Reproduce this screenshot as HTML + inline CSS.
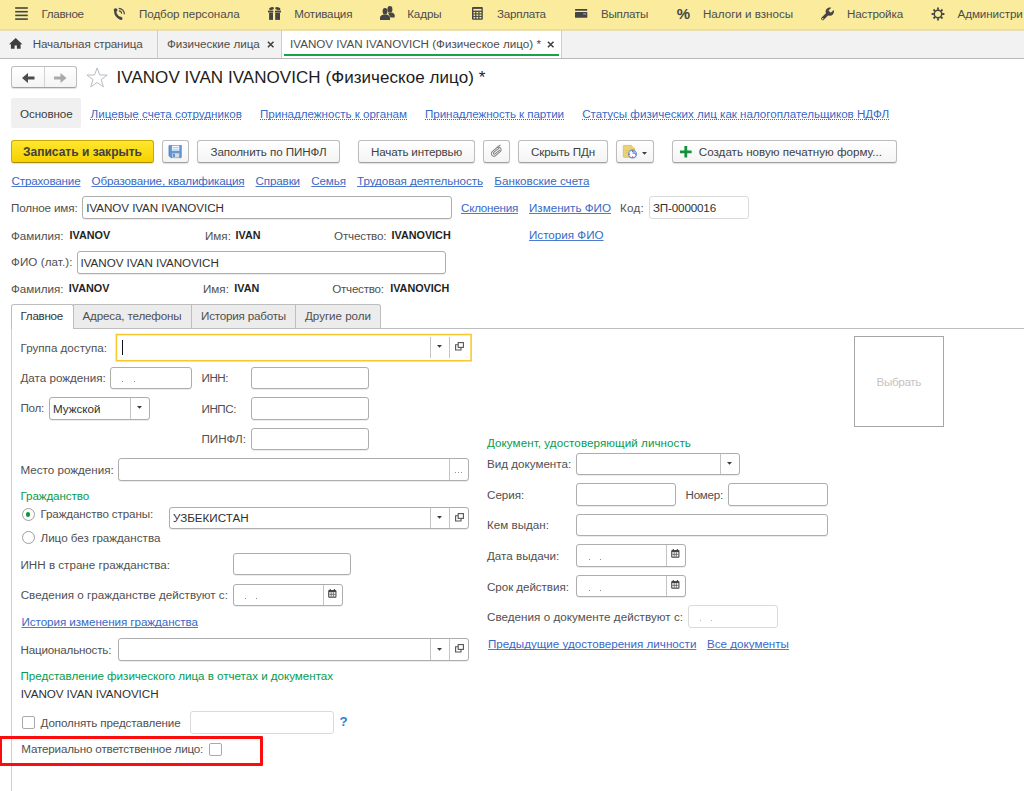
<!DOCTYPE html>
<html lang="ru">
<head>
<meta charset="utf-8">
<title>IVANOV IVAN IVANOVICH</title>
<style>
html,body{margin:0;padding:0;}
body{width:1024px;height:791px;overflow:hidden;background:#fff;position:relative;
 font-family:"Liberation Sans",sans-serif;font-size:11.63px;color:#505050;}
.a{position:absolute;white-space:nowrap;line-height:14px;}
.topbar{position:absolute;left:0;top:0;width:1024px;height:30px;background:#fbec9d;}
.tabbar{position:absolute;left:0;top:30px;width:1024px;height:28px;background:#f2f2f2;border-bottom:1px solid #b9b9b9;}
.m{color:#4d4d4d;}
.lnk{color:#3969c6;text-decoration:underline;text-decoration-skip-ink:none;text-decoration-thickness:1px;text-decoration-color:#4f7bcf;text-underline-offset:1px;}
.dot{color:#3969c6;text-decoration:underline dotted;text-decoration-skip-ink:none;text-decoration-thickness:1px;text-underline-offset:0.8px;}
.grn{color:#099a4f;}
.v{color:#303030;}
.inp{position:absolute;box-sizing:border-box;border:1px solid #adadad;border-radius:3px;background:#fff;height:22px;box-shadow:0 1px 0 rgba(0,0,0,.07);}
.inp.l{border-color:#dadada;box-shadow:none;}
.btn{position:absolute;box-sizing:border-box;border:1px solid #bdbdbd;border-bottom-color:#a2a2a2;border-radius:3px;background:linear-gradient(#fff,#f4f4f4);height:23px;
 box-shadow:0 1px 1px rgba(0,0,0,.13);text-align:center;line-height:21px;color:#3f3f3f;white-space:nowrap;}
.sep{position:absolute;width:1px;background:#c4c4c4;}
.b{font-weight:bold;color:#1f1f1f;font-size:10.8px;}
.dt{position:absolute;width:1px;height:1px;background:#909090;}
.tri{position:absolute;width:0;height:0;border-left:2.6px solid transparent;border-right:2.6px solid transparent;border-top:2.8px solid #3c3c3c;}
.chk{position:absolute;box-sizing:border-box;width:13px;height:13px;border:1px solid #a9a9a9;border-radius:2px;background:#fff;}
.rad{position:absolute;box-sizing:border-box;width:13px;height:13px;border:1px solid #9d9d9d;border-radius:50%;background:#fff;}
svg{position:absolute;overflow:visible;}
</style>
</head>
<body>
<!-- TOP MENU -->
<div class="topbar"></div>
<div style="position:absolute;left:0;top:29px;width:1024px;height:1px;background:#eedf8a;"></div>
<!-- hamburger -->
<svg style="left:15px;top:7px;" width="13" height="13" viewBox="0 0 13 13"><g fill="#454545"><rect x="0.2" y="0.2" width="12.6" height="1.6"/><rect x="0.2" y="3.9" width="12.6" height="1.6"/><rect x="0.2" y="7.6" width="12.6" height="1.6"/><rect x="0.2" y="11.3" width="12.6" height="1.6"/></g></svg>
<div class="a m" style="left:41.5px;letter-spacing:-0.310px;top:6.5px;">Главное</div>
<!-- phone -->
<svg style="left:113px;top:7px;" width="13" height="14" viewBox="0 0 13 14"><path d="M2.1 3.4 C2.2 7 4.4 10.2 7.4 11.5" fill="none" stroke="#454545" stroke-width="2.3" stroke-linecap="round"/><ellipse cx="2.6" cy="2.9" rx="1.9" ry="1.7" fill="#454545"/><ellipse cx="7.4" cy="11.2" rx="2.2" ry="1.5" transform="rotate(25 7.4 11.2)" fill="#454545"/><path d="M5.9 3.9 A3 3 0 0 1 8.7 6.6" fill="none" stroke="#454545" stroke-width="1.1"/><path d="M5.7 1.3 A5.8 5.8 0 0 1 11.4 7.2" fill="none" stroke="#454545" stroke-width="1.2"/></svg>
<div class="a m" style="left:139.0px;letter-spacing:-0.084px;top:6.5px;">Подбор персонала</div>
<!-- gift -->
<svg style="left:268px;top:7px;" width="13" height="13" viewBox="0 0 13 13"><g fill="#454545"><ellipse cx="3.5" cy="1.6" rx="2.5" ry="1.5" transform="rotate(-12 3.5 1.6)"/><ellipse cx="9.8" cy="1.6" rx="2.7" ry="1.5" transform="rotate(12 9.8 1.6)"/><rect x="0" y="3.6" width="5.3" height="1.9"/><rect x="7" y="3.6" width="6" height="1.9"/><rect x="1.1" y="5.8" width="3.9" height="7.1"/><rect x="7.2" y="5.8" width="4.8" height="7.1"/></g></svg>
<div class="a m" style="left:294.2px;letter-spacing:-0.190px;top:6.5px;">Мотивация</div>
<!-- people -->
<svg style="left:380px;top:6px;" width="15" height="14" viewBox="0 0 15 14"><g fill="#454545"><ellipse cx="9.9" cy="3.4" rx="2.5" ry="3.3"/><path d="M8 7 L12 6.6 C13.6 7.2 14.7 8.2 14.7 9.6 L14.7 11.4 L10.5 11.4 Z"/><ellipse cx="5" cy="5.2" rx="2.4" ry="3.2"/><path d="M0 13.9 L0 11.4 C0 9.8 1.6 9 3.4 8.4 L6.6 8.4 C8.6 9 10 9.8 10 11.4 L10 13.9 Z"/></g></svg>
<div class="a m" style="left:407.2px;letter-spacing:-0.109px;top:6.5px;">Кадры</div>
<!-- calculator -->
<svg style="left:471.7px;top:7.2px;" width="11" height="13" viewBox="0 0 11 13"><rect x="0" y="0" width="10.8" height="12.7" rx="1" fill="#454545"/><g fill="#fbec9d"><rect x="1.3" y="1.9" width="8.2" height="1.7"/><rect x="1.5" y="4.9" width="1.7" height="1.5"/><rect x="4.4" y="4.9" width="1.9" height="1.5"/><rect x="7.5" y="4.9" width="1.9" height="1.5"/><rect x="1.5" y="7.4" width="1.7" height="1.5"/><rect x="4.4" y="7.4" width="1.9" height="1.5"/><rect x="7.5" y="7.4" width="1.9" height="1.5"/><rect x="1.5" y="9.9" width="1.7" height="1.6"/><rect x="4.4" y="9.9" width="1.9" height="1.6"/><rect x="7.5" y="9.9" width="1.9" height="1.6"/></g></svg>
<div class="a m" style="left:497.0px;letter-spacing:-0.263px;top:6.5px;">Зарплата</div>
<!-- card -->
<svg style="left:574.8px;top:9px;" width="13" height="9" viewBox="0 0 13 9"><rect x="0" y="0.1" width="12.3" height="1.6" rx="0.4" fill="#454545"/><rect x="0" y="3.1" width="12.3" height="5.7" rx="0.6" fill="#454545"/><rect x="8.2" y="4" width="3" height="1.7" fill="#8b8672"/></svg>
<div class="a m" style="left:601.0px;letter-spacing:-0.297px;top:6.5px;">Выплаты</div>
<div class="a" style="left:676.8px;top:4.9px;font-size:15px;font-weight:bold;color:#454545;line-height:18px;">%</div>
<div class="a m" style="left:703.0px;letter-spacing:-0.024px;top:6.5px;">Налоги и взносы</div>
<!-- wrench -->
<svg style="left:820px;top:6.5px;" width="14" height="14" viewBox="0 0 14 14"><path d="M2.7 11.7 L8 6.4" fill="none" stroke="#454545" stroke-width="3.1" stroke-linecap="round"/><circle cx="9.8" cy="4.6" r="4.2" fill="#454545"/><rect x="9.6" y="3" width="6" height="3.2" transform="rotate(-45 9.8 4.6)" fill="#fbec9d"/><circle cx="2.7" cy="11.7" r="0.75" fill="#fbec9d"/></svg>
<div class="a m" style="left:847.0px;letter-spacing:-0.137px;top:6.5px;">Настройка</div>
<!-- gear -->
<svg style="left:931px;top:6.5px;" width="14" height="14" viewBox="-7 -7 14 14"><circle r="3.75" fill="none" stroke="#454545" stroke-width="1.5"/><g stroke="#454545" stroke-width="1.8"><path d="M0 -4.2V-6.4M0 4.2V6.4M-4.2 0H-6.4M4.2 0H6.4"/><path d="M2.97 -2.97L4.5 -4.5M-2.97 -2.97L-4.5 -4.5M2.97 2.97L4.5 4.5M-2.97 2.97L-4.5 4.5"/></g></svg>
<div class="a m" style="left:957.5px;letter-spacing:-0.075px;top:6.5px;">Администри</div>

<!-- TAB BAR -->
<div class="tabbar"></div>
<div style="position:absolute;left:0;top:30px;width:1024px;height:1px;background:#e9dfb2;"></div>
<svg style="left:9px;top:37.6px;" width="14" height="11" viewBox="0 0 14 11"><path d="M6.7 0 L13.4 6.2 L11.6 6.2 L11.6 10.7 L7.9 10.7 L7.9 7.4 L5.6 7.4 L5.6 10.7 L1.9 10.7 L1.9 6.2 L0 6.2 Z" fill="#3f3f3f"/></svg>
<div class="a m" style="left:32.8px;letter-spacing:-0.152px;top:36.7px;">Начальная страница</div>
<div class="sep" style="left:157px;top:30px;height:28px;background:#cdcdcd;"></div>
<div class="a m" style="left:167.0px;letter-spacing:-0.028px;top:36.7px;">Физические лица</div>
<svg style="left:266.6px;top:41.4px;" width="7.4" height="7" viewBox="0 0 8 8"><path d="M0.8 0.8L7.2 7.2M7.2 0.8L0.8 7.2" stroke="#3f3f3f" stroke-width="1.7"/></svg>
<div class="sep" style="left:281px;top:30px;height:28px;background:#cdcdcd;"></div>
<div style="position:absolute;left:282px;top:31px;width:279px;height:27px;background:#fff;"></div>
<div style="position:absolute;left:284px;top:54.3px;width:275px;height:2px;background:#1ba04c;"></div>
<div class="a m" style="left:290.0px;letter-spacing:0.006px;top:36.7px;">IVANOV IVAN IVANOVICH (Физическое лицо) *</div>
<svg style="left:547px;top:41.4px;" width="7.4" height="7" viewBox="0 0 8 8"><path d="M0.8 0.8L7.2 7.2M7.2 0.8L0.8 7.2" stroke="#3f3f3f" stroke-width="1.7"/></svg>
<div class="sep" style="left:561px;top:30px;height:28px;background:#cdcdcd;"></div>

<!-- TITLE -->
<div class="btn" style="left:11px;top:66px;width:66px;height:22px;"></div>
<div class="sep" style="left:44px;top:67px;height:20px;background:#d2d2d2;"></div>
<svg style="left:21.5px;top:72.5px;" width="13" height="10" viewBox="0 0 13 10"><path d="M12.5 3.4H6V0L0 5L6 10V6.6H12.5Z" fill="#4c4c4c"/></svg>
<svg style="left:53.7px;top:72.5px;" width="13" height="10" viewBox="0 0 13 10"><path d="M0 3.4H6.5V0L12.5 5L6.5 10V6.6H0Z" fill="#a9a9a9"/></svg>
<svg style="left:86.3px;top:66.9px;" width="22.2" height="21" viewBox="0 0 20 19"><path d="M10 0.8 L12.3 7.2 L19.2 7.3 L13.7 11.4 L15.7 18 L10 14 L4.3 18 L6.3 11.4 L0.8 7.3 L7.7 7.2 Z" fill="none" stroke="#b5bcc4" stroke-width="0.9"/></svg>
<div class="a" style="left:116.5px;letter-spacing:0.052px;top:67.8px;font-size:17px;line-height:20px;color:#1c1c1c;">IVANOV IVAN IVANOVICH (Физическое лицо) *</div>

<!-- SUBNAV -->
<div style="position:absolute;left:11px;top:98px;width:70px;height:30px;background:#f0f0f0;border-radius:2px;"></div>
<div class="a" style="left:20.0px;letter-spacing:-0.085px;top:106.6px;color:#3c3c3c;">Основное</div>
<div class="a dot" style="left:90.5px;letter-spacing:0.026px;top:106.6px;">Лицевые счета сотрудников</div>
<div class="a dot" style="left:260.0px;letter-spacing:-0.032px;top:106.6px;">Принадлежность к органам</div>
<div class="a dot" style="left:425.0px;letter-spacing:-0.078px;top:106.6px;">Принадлежность к партии</div>
<div class="a dot" style="left:582.2px;letter-spacing:-0.020px;top:106.6px;">Статусы физических лиц как налогоплательщиков НДФЛ</div>

<!-- TOOLBAR -->
<div class="btn" style="left:11px;top:140px;width:143px;background:linear-gradient(#ffe62e,#f6d100);border-color:#c9aa00;border-bottom-color:#a88d00;font-weight:bold;font-size:12px;color:#42413a;line-height:23px;">Записать и закрыть</div>
<div class="btn" style="left:162px;top:140px;width:27px;"></div>
<svg style="left:169px;top:145.3px;" width="13" height="13" viewBox="0 0 13 13"><path d="M0.6 0H12.2Q12.8 0 12.8 0.6V12Q12.8 12.6 12.2 12.6H1.8L0 10.8V0.6Q0 0 0.6 0Z" fill="#6496d6"/><path d="M0 0.6V10.8L1.8 12.6H12.2" fill="none" stroke="#4a78b8" stroke-width="0.8"/><rect x="2.9" y="0.7" width="7.4" height="5" fill="#f4f8fd"/><rect x="3.6" y="2" width="6" height="0.8" fill="#a9c4e8"/><rect x="3.6" y="3.8" width="6" height="0.8" fill="#a9c4e8"/><rect x="3.3" y="8.2" width="6.9" height="4.4" fill="#d3dcdf"/><rect x="4.2" y="8.8" width="1.6" height="3.2" fill="#4f80c2"/></svg>
<div class="btn" style="left:197px;top:140px;width:143px;letter-spacing:-0.08px;">Заполнить по ПИНФЛ</div>
<div class="btn" style="left:358px;top:140px;width:117px;letter-spacing:-0.17px;">Начать интервью</div>
<div class="btn" style="left:483px;top:140px;width:27px;"></div>
<svg style="left:496.7px;top:150.8px;" width="1" height="1" viewBox="0 0 1 1"><g transform="rotate(-40)" fill="none" stroke="#7d7d7d" stroke-width="0.95"><rect x="-6.6" y="-2.6" width="11.2" height="5.2" rx="2.6"/><path d="M3.8 -1H-3.4A1 1 0 0 0 -3.4 1H3"/><path d="M2 -2.6H6.6"/></g></svg>
<div class="btn" style="left:518px;top:140px;width:90px;letter-spacing:-0.16px;">Скрыть ПДн</div>
<div class="btn" style="left:616px;top:140px;width:38px;"></div>
<svg style="left:623px;top:145.3px;" width="14" height="14" viewBox="0 0 14 14"><path d="M0.9 0.4H8.2L11.6 3.6V11.6Q11.6 12.2 11 12.2H0.9Q0.3 12.2 0.3 11.6V1Q0.3 0.4 0.9 0.4Z" fill="#ecd276" stroke="#d9b955" stroke-width="0.8"/><path d="M8.2 0.4V3.6H11.6" fill="#f6e6a8" stroke="#d9b955" stroke-width="0.6"/><path d="M2.6 5.6H5.6M2.6 7.6H4.6" stroke="#dcc060" stroke-width="0.9"/><circle cx="9.5" cy="9.1" r="3.9" fill="#fff" stroke="#5c90d2" stroke-width="1.2"/><path d="M9.5 9.1V5.8A3.3 3.3 0 0 1 12.8 9.1Z" fill="#8db3e4"/><g fill="#e03535"><circle cx="9.5" cy="6.2" r="0.7"/><circle cx="9.5" cy="12" r="0.7"/><circle cx="6.6" cy="9.1" r="0.7"/><circle cx="12.4" cy="9.1" r="0.7"/></g></svg>
<svg style="left:642.2px;top:151.6px;" width="5" height="2.8" viewBox="0 0 5.4 3"><path d="M0 0H5.4L2.7 3Z" fill="#3a3a3a"/></svg>
<div class="btn" style="left:672px;top:140px;width:225px;text-align:left;padding-left:25.8px;">Создать новую печатную форму...</div>
<svg style="left:680px;top:146px;" width="12" height="12" viewBox="0 0 12 12"><path d="M4.4 0H7.2V4.4H11.6V7.2H7.2V11.6H4.4V7.2H0V4.4H4.4Z" fill="#12903a"/></svg>
<!-- LINKS ROW -->
<div class="a lnk" style="left:11.5px;letter-spacing:-0.153px;top:173.5px;">Страхование</div>
<div class="a lnk" style="left:91.5px;letter-spacing:-0.148px;top:173.5px;">Образование, квалификация</div>
<div class="a lnk" style="left:255.5px;letter-spacing:-0.127px;top:173.5px;">Справки</div>
<div class="a lnk" style="left:311.3px;letter-spacing:-0.144px;top:173.5px;">Семья</div>
<div class="a lnk" style="left:357.0px;letter-spacing:-0.059px;top:173.5px;">Трудовая деятельность</div>
<div class="a lnk" style="left:494.3px;letter-spacing:0.024px;top:173.5px;">Банковские счета</div>

<!-- FULL NAME -->
<div class="a" style="left:11.0px;letter-spacing:-0.132px;top:200.5px;">Полное имя:</div>
<div class="inp" style="left:82px;top:196px;height:23px;width:370px;"></div>
<div class="a v" style="left:86.3px;letter-spacing:-0.066px;top:201px;">IVANOV IVAN IVANOVICH</div>
<div class="a lnk" style="left:461.0px;letter-spacing:-0.233px;top:200.5px;">Склонения</div>
<div class="a lnk" style="left:529.0px;letter-spacing:0.008px;top:200.5px;">Изменить ФИО</div>
<div class="a" style="left:620.0px;letter-spacing:0.250px;top:200.5px;">Код:</div>
<div class="inp l" style="left:649px;top:196px;height:23px;width:100px;"></div>
<div class="a v" style="left:653.0px;letter-spacing:-0.152px;top:201px;">ЗП-0000016</div>

<div class="a" style="left:11px;top:228.5px;">Фамилия:</div>
<div class="a b" style="left:69.5px;top:228.4px;">IVANOV</div>
<div class="a" style="left:205px;top:228.5px;">Имя:</div>
<div class="a b" style="left:235.5px;top:228.4px;">IVAN</div>
<div class="a" style="left:334.1px;letter-spacing:-0.174px;top:228.5px;">Отчество:</div>
<div class="a b" style="left:391.5px;top:228.4px;">IVANOVICH</div>
<div class="a lnk" style="left:529px;top:227.9px;">История ФИО</div>

<div class="a" style="left:11.0px;letter-spacing:0.072px;top:255px;">ФИО (лат.):</div>
<div class="inp" style="left:77px;top:251px;height:23px;width:369px;"></div>
<div class="a v" style="left:80.5px;letter-spacing:-0.028px;top:255.5px;">IVANOV IVAN IVANOVICH</div>

<div class="a" style="left:11px;top:282px;">Фамилия:</div>
<div class="a b" style="left:68.8px;top:281.3px;">IVANOV</div>
<div class="a" style="left:203px;top:282px;">Имя:</div>
<div class="a b" style="left:234.3px;top:281.3px;">IVAN</div>
<div class="a" style="left:332.2px;letter-spacing:-0.241px;top:282px;">Отчество:</div>
<div class="a b" style="left:390.2px;top:281.3px;">IVANOVICH</div>

<!-- PAGE TABS -->
<div style="position:absolute;left:11px;top:328px;width:1013px;height:1px;background:#bdbdbd;"></div>
<div style="position:absolute;left:11px;top:328px;width:1px;height:463px;background:#cfcfcf;"></div>
<div style="position:absolute;left:73px;top:304px;width:308px;height:24px;background:#ececec;border:1px solid #bdbdbd;border-bottom:none;box-sizing:border-box;border-radius:0 3px 0 0;"></div>
<div class="sep" style="left:191px;top:304px;height:24px;background:#bdbdbd;"></div>
<div class="sep" style="left:295px;top:304px;height:24px;background:#bdbdbd;"></div>
<div style="position:absolute;left:11px;top:304px;width:63px;height:25px;background:#fff;border:1px solid #bdbdbd;border-bottom:none;box-sizing:border-box;border-radius:3px 3px 0 0;"></div>
<div class="a" style="left:20.5px;letter-spacing:-0.275px;top:308.9px;color:#333;">Главное</div>
<div class="a" style="left:82.5px;letter-spacing:-0.158px;top:308.9px;">Адреса, телефоны</div>
<div class="a" style="left:201.0px;letter-spacing:-0.200px;top:308.9px;">История работы</div>
<div class="a" style="left:305.0px;letter-spacing:-0.037px;top:308.9px;">Другие роли</div>
<!-- LEFT FORM -->
<div class="a" style="left:20.5px;top:340.5px;">Группа доступа:</div>
<svg style="left:115px;top:333px;" width="358" height="30" viewBox="0 0 358 30"><rect x="1.4" y="1.55" width="354.7" height="26.2" fill="#fff" stroke="#f8c92f" stroke-width="1.6"/></svg>
<div style="position:absolute;left:122px;top:340px;width:1px;height:15px;background:#111;"></div>
<div class="sep" style="left:430px;top:337px;height:21px;"></div>
<div class="sep" style="left:449px;top:337px;height:21px;"></div>
<svg style="left:437.2px;top:345px;" width="5" height="2.8" viewBox="0 0 5.4 3"><path d="M0 0H5.4L2.7 3Z" fill="#3a3a3a"/></svg>
<svg style="left:455px;top:342.2px;" width="9" height="9" viewBox="0 0 9 9"><rect x="3.2" y="0.6" width="5.2" height="4.8" fill="#fff" stroke="#555" stroke-width="1.1"/><path d="M3 2.8H0.6V8H6V5.6" fill="none" stroke="#555" stroke-width="1.1"/></svg>

<div class="a" style="left:20.5px;top:371px;">Дата рождения:</div>
<div class="inp" style="left:110px;top:367px;height:22px;width:82px;"></div>
<div class="dt" style="left:122px;top:381px;"></div><div class="dt" style="left:134px;top:381px;"></div>
<div class="a" style="left:201.5px;letter-spacing:-0.473px;top:371px;">ИНН:</div>
<div class="inp" style="left:251px;top:367px;height:22px;width:118px;"></div>

<div class="a" style="left:20.5px;letter-spacing:-0.273px;top:401px;">Пол:</div>
<div class="inp" style="left:49px;top:397px;height:23px;width:101px;"></div>
<div class="a v" style="left:53px;top:402px;">Мужской</div>
<div class="sep" style="left:130px;top:398px;height:21px;"></div>
<svg style="left:137px;top:406.3px;" width="5" height="2.8" viewBox="0 0 5.4 3"><path d="M0 0H5.4L2.7 3Z" fill="#3a3a3a"/></svg>
<div class="a" style="left:201.5px;letter-spacing:-0.447px;top:401.5px;">ИНПС:</div>
<div class="inp" style="left:251px;top:397px;height:23px;width:118px;"></div>

<div class="a" style="left:201.5px;top:431.5px;">ПИНФЛ:</div>
<div class="inp" style="left:251px;top:428px;height:22px;width:118px;"></div>

<div class="a" style="left:20.5px;top:462.5px;">Место рождения:</div>
<div class="inp" style="left:118px;top:458px;height:23px;width:351px;"></div>
<div class="sep" style="left:449px;top:459px;height:21px;"></div>
<div class="dt" style="left:455px;top:471.5px;width:1px;height:1px;"></div><div class="dt" style="left:458px;top:471.5px;width:1px;height:1px;"></div><div class="dt" style="left:461px;top:471.5px;width:1px;height:1px;"></div>

<div class="a grn" style="left:20.5px;letter-spacing:-0.107px;top:489px;">Гражданство</div>
<div class="rad" style="left:21.5px;top:508px;"></div>
<div style="position:absolute;left:25.8px;top:512.3px;width:4.4px;height:4.4px;border-radius:50%;background:#10953c;"></div>
<div class="a" style="left:40.5px;letter-spacing:-0.130px;top:506.7px;">Гражданство страны:</div>
<div class="inp" style="left:169px;top:507px;height:22px;width:300px;"></div>
<div class="a v" style="left:173px;top:510.5px;">УЗБЕКИСТАН</div>
<div class="sep" style="left:430px;top:508px;height:20px;"></div>
<div class="sep" style="left:449px;top:508px;height:20px;"></div>
<svg style="left:437px;top:516px;" width="5" height="2.8" viewBox="0 0 5.4 3"><path d="M0 0H5.4L2.7 3Z" fill="#3a3a3a"/></svg>
<svg style="left:454.7px;top:512.8px;" width="9" height="9" viewBox="0 0 9 9"><rect x="3.2" y="0.6" width="5.2" height="4.8" fill="#fff" stroke="#555" stroke-width="1.1"/><path d="M3 2.8H0.6V8H6V5.6" fill="none" stroke="#555" stroke-width="1.1"/></svg>
<div class="rad" style="left:21.5px;top:531px;"></div>
<div class="a" style="left:40.5px;top:530.5px;">Лицо без гражданства</div>

<div class="a" style="left:20.5px;top:558px;">ИНН в стране гражданства:</div>
<div class="inp" style="left:233px;top:553px;height:22px;width:118px;"></div>

<div class="a" style="left:20.7px;letter-spacing:0.031px;top:588px;">Сведения о гражданстве действуют с:</div>
<div class="inp" style="left:233px;top:584px;height:22px;width:110px;"></div>
<div class="dt" style="left:245px;top:598px;"></div><div class="dt" style="left:256px;top:598px;"></div>
<div class="sep" style="left:323px;top:585px;height:20px;"></div>

<div class="a lnk" style="left:21.5px;letter-spacing:-0.058px;top:615.4px;">История изменения гражданства</div>

<div class="a" style="left:20.5px;letter-spacing:-0.181px;top:642.5px;">Национальность:</div>
<div class="inp" style="left:118px;top:638px;height:23px;width:351px;"></div>
<div class="sep" style="left:430px;top:639px;height:21px;"></div>
<div class="sep" style="left:449px;top:639px;height:21px;"></div>
<svg style="left:437px;top:647.5px;" width="5" height="2.8" viewBox="0 0 5.4 3"><path d="M0 0H5.4L2.7 3Z" fill="#3a3a3a"/></svg>
<svg style="left:454.7px;top:644.3px;" width="9" height="9" viewBox="0 0 9 9"><rect x="3.2" y="0.6" width="5.2" height="4.8" fill="#fff" stroke="#555" stroke-width="1.1"/><path d="M3 2.8H0.6V8H6V5.6" fill="none" stroke="#555" stroke-width="1.1"/></svg>

<div class="a grn" style="left:20.5px;letter-spacing:-0.033px;top:669px;">Представление физического лица в отчетах и документах</div>
<div class="a v" style="left:20.7px;letter-spacing:-0.052px;top:687.3px;">IVANOV IVAN IVANOVICH</div>

<div class="chk" style="left:22px;top:716px;"></div>
<div class="a" style="left:40.5px;letter-spacing:-0.124px;top:715.5px;">Дополнять представление</div>
<div class="inp l" style="left:190px;top:711px;height:23px;width:144px;"></div>
<div class="a" style="left:339.5px;top:715.4px;color:#2b80c8;font-weight:bold;font-size:13.3px;">?</div>

<div class="a" style="left:21.3px;letter-spacing:-0.167px;top:742px;">Материально ответственное лицо:</div>
<div class="chk" style="left:209px;top:743px;"></div>
<div style="position:absolute;left:-1px;top:736px;width:264px;height:29.5px;border:3px solid #fb0d0d;box-sizing:border-box;border-radius:1px;"></div>
<!-- RIGHT FORM -->
<div style="position:absolute;left:854px;top:336px;width:90px;height:91px;border:1px solid #a6a6a6;box-sizing:border-box;background:#fff;"></div>
<div class="a" style="left:876.6px;letter-spacing:-0.347px;top:374.5px;color:#c4c4c4;">Выбрать</div>

<div class="a grn" style="left:487.0px;letter-spacing:0.062px;top:435.5px;">Документ, удостоверяющий личность</div>
<div class="a" style="left:487px;top:456.9px;">Вид документа:</div>
<div class="inp" style="left:576px;top:453px;height:22px;width:164px;"></div>
<div class="sep" style="left:720px;top:454px;height:20px;"></div>
<svg style="left:727px;top:462px;" width="5" height="2.8" viewBox="0 0 5.4 3"><path d="M0 0H5.4L2.7 3Z" fill="#3a3a3a"/></svg>

<div class="a" style="left:487px;top:488.3px;">Серия:</div>
<div class="inp" style="left:576px;top:483px;height:23px;width:100px;"></div>
<div class="a" style="left:685.5px;letter-spacing:-0.253px;top:488.3px;">Номер:</div>
<div class="inp" style="left:728px;top:483px;height:23px;width:100px;"></div>

<div class="a" style="left:487px;top:517.7px;">Кем выдан:</div>
<div class="inp" style="left:576px;top:514px;height:22px;width:252px;"></div>

<div class="a" style="left:487px;top:549px;">Дата выдачи:</div>
<div class="inp" style="left:576px;top:544px;height:23px;width:110px;"></div>
<div class="dt" style="left:589px;top:559px;"></div><div class="dt" style="left:600px;top:559px;"></div>
<div class="sep" style="left:666px;top:545px;height:21px;"></div>

<div class="a" style="left:487.0px;letter-spacing:-0.066px;top:579.5px;">Срок действия:</div>
<div class="inp" style="left:576px;top:575px;height:22px;width:110px;"></div>
<div class="dt" style="left:589px;top:589.5px;"></div><div class="dt" style="left:600px;top:589.5px;"></div>
<div class="sep" style="left:666px;top:576px;height:20px;"></div>

<div class="a" style="left:487.0px;letter-spacing:0.042px;top:610px;">Сведения о документе действуют с:</div>
<div class="inp l" style="left:688px;top:605px;height:23px;width:90px;"></div>
<div class="dt" style="left:700px;top:619.5px;background:#b4b4b4;"></div><div class="dt" style="left:711px;top:619.5px;background:#b4b4b4;"></div>

<div class="a lnk" style="left:488px;top:637.3px;">Предыдущие удостоверения личности</div>
<div class="a lnk" style="left:707px;top:637.3px;">Все документы</div>

<!-- calendar icons -->
<svg style="left:327.8px;top:588.6px;" width="9.4" height="9.4" viewBox="0 0 10 10"><rect x="0.2" y="1" width="8.8" height="8.2" rx="1" fill="#444"/><rect x="1.8" y="0" width="1.2" height="2" fill="#444"/><rect x="6.2" y="0" width="1.2" height="2" fill="#444"/><rect x="1.3" y="3.3" width="6.6" height="4.8" fill="#f4f4f4"/><path d="M3.4 3.3V8.1M5.7 3.3V8.1M1.3 5.7H7.9" stroke="#444" stroke-width="0.7"/></svg>
<svg style="left:671.2px;top:549.1px;" width="9.4" height="9.4" viewBox="0 0 10 10"><rect x="0.2" y="1" width="8.8" height="8.2" rx="1" fill="#444"/><rect x="1.8" y="0" width="1.2" height="2" fill="#444"/><rect x="6.2" y="0" width="1.2" height="2" fill="#444"/><rect x="1.3" y="3.3" width="6.6" height="4.8" fill="#f4f4f4"/><path d="M3.4 3.3V8.1M5.7 3.3V8.1M1.3 5.7H7.9" stroke="#444" stroke-width="0.7"/></svg>
<svg style="left:671.2px;top:579.6px;" width="9.4" height="9.4" viewBox="0 0 10 10"><rect x="0.2" y="1" width="8.8" height="8.2" rx="1" fill="#444"/><rect x="1.8" y="0" width="1.2" height="2" fill="#444"/><rect x="6.2" y="0" width="1.2" height="2" fill="#444"/><rect x="1.3" y="3.3" width="6.6" height="4.8" fill="#f4f4f4"/><path d="M3.4 3.3V8.1M5.7 3.3V8.1M1.3 5.7H7.9" stroke="#444" stroke-width="0.7"/></svg>

</body>
</html>
